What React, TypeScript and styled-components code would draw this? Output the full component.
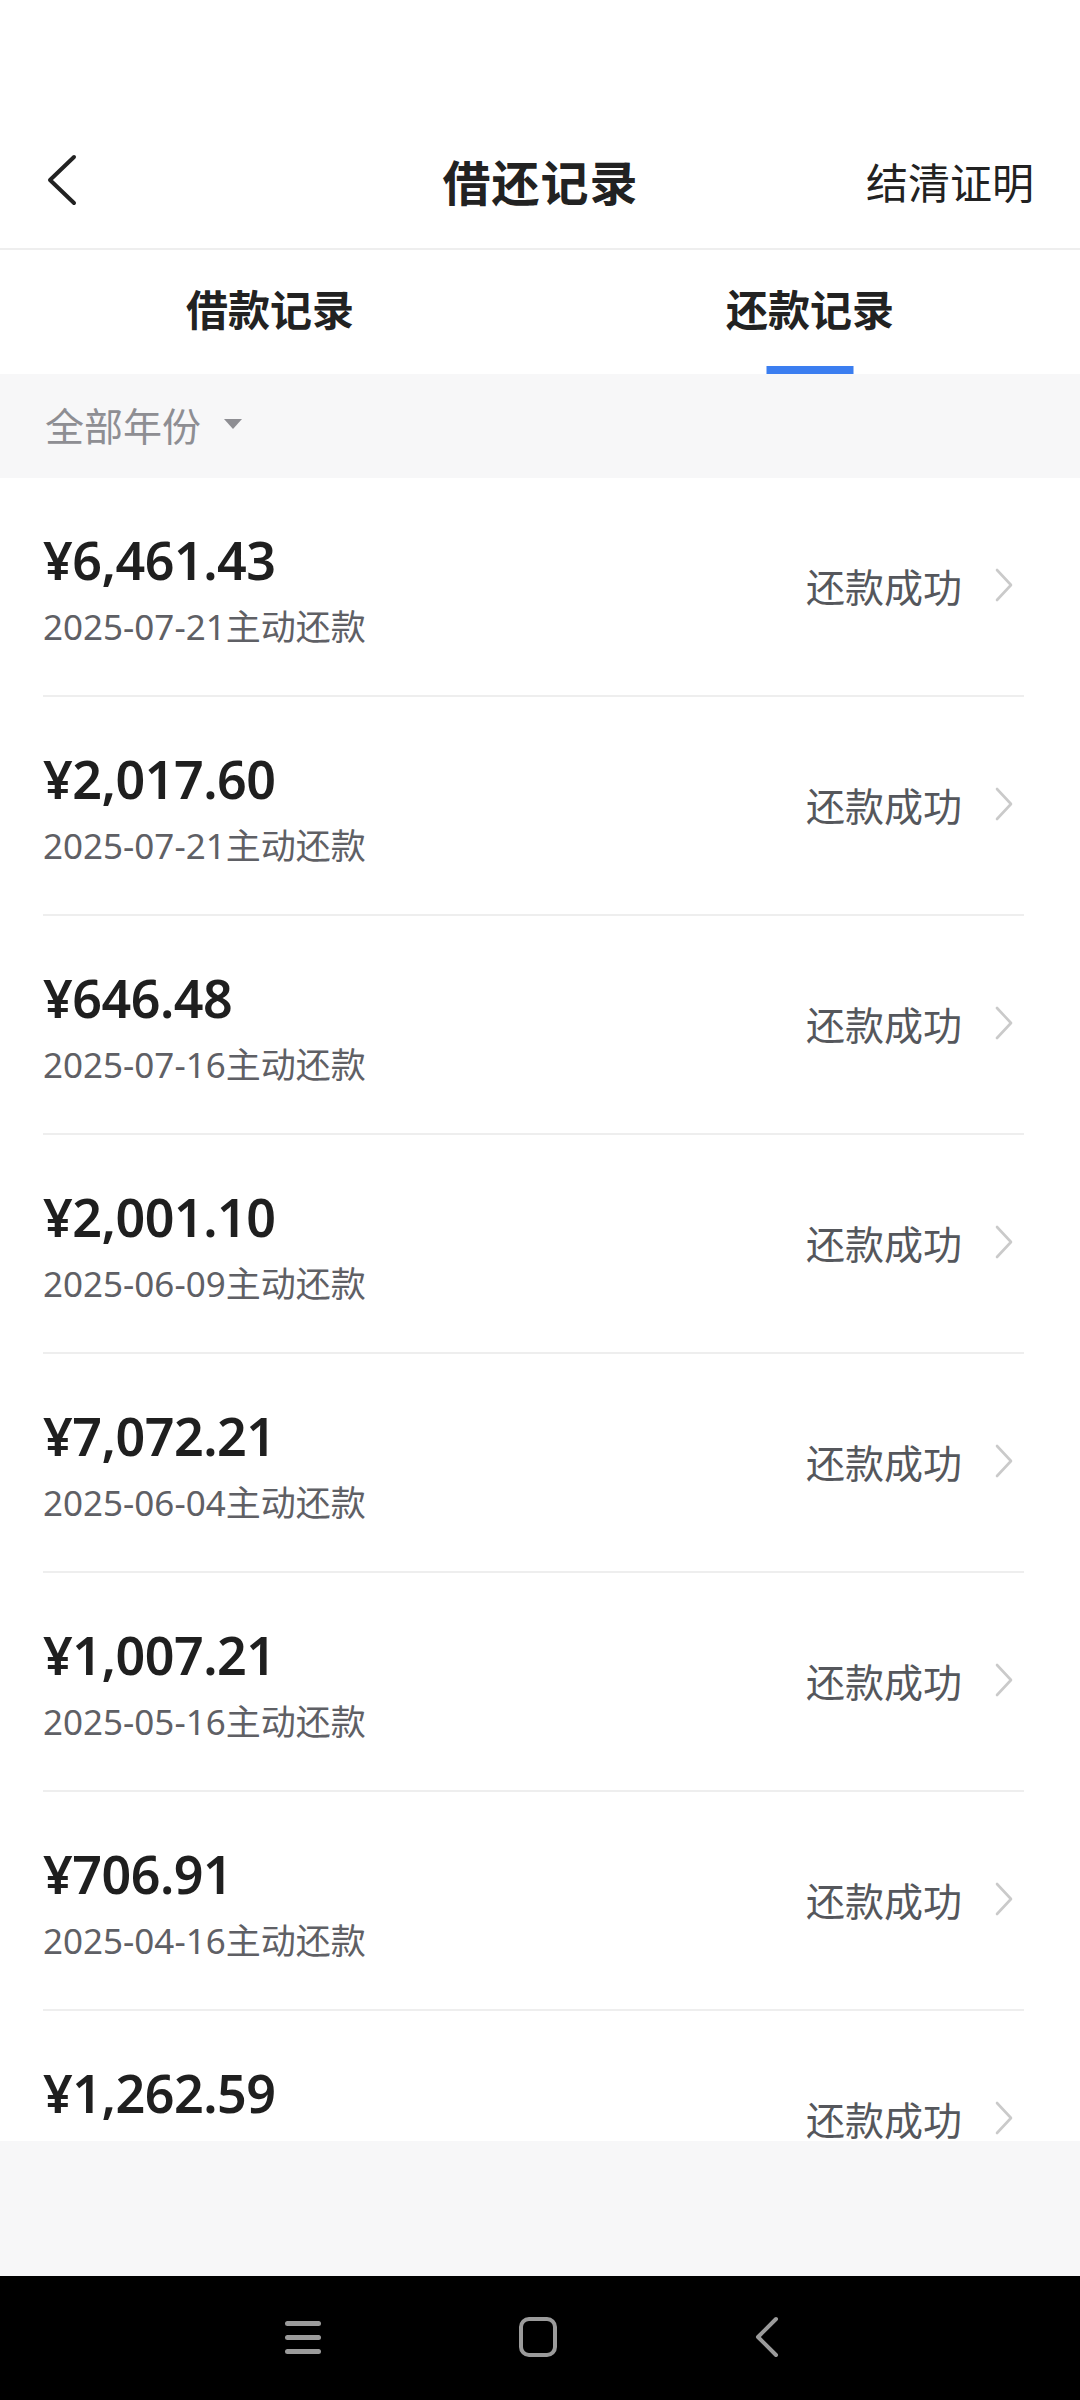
import React from "react";
import styled, { createGlobalStyle } from "styled-components";

const GlobalStyle = createGlobalStyle`
  body {
    margin: 0;
    background: #ffffff;
    font-family: "Noto Sans", "Noto Sans CJK SC", sans-serif;
  }
`;

const Page = styled.div`
  width: 1080px;
  height: 2400px;
  display: flex;
  flex-direction: column;
  background: #ffffff;
  overflow: hidden;
`;

const StatusSpace = styled.div`
  height: 118px;
  flex-shrink: 0;
`;

const Header = styled.div`
  height: 132px;
  flex-shrink: 0;
  display: grid;
  grid-template-columns: 1fr auto 1fr;
  align-items: center;
  padding: 0 46px 6px 47px;
  box-sizing: border-box;
  border-bottom: 2px solid #eeeeee;
`;

const BackButton = styled.div`
  display: flex;
  align-items: center;
`;

const Title = styled.div`
  font-size: 48px;
  font-weight: 700;
  color: #222222;
  letter-spacing: 1px;
`;

const HeaderAction = styled.div`
  justify-self: end;
  font-size: 42px;
  color: #222222;
`;

const Tabs = styled.div`
  height: 124px;
  flex-shrink: 0;
  display: grid;
  grid-template-columns: 1fr 1fr;
`;

const Tab = styled.div<{ active?: boolean }>`
  position: relative;
  display: flex;
  align-items: center;
  justify-content: center;
  padding-bottom: 10px;
  font-size: 42px;
  font-weight: 700;
  color: #222222;

  &::after {
    content: "";
    display: ${(p) => (p.active ? "block" : "none")};
    position: absolute;
    bottom: 0;
    left: 50%;
    transform: translateX(-50%);
    width: 87px;
    height: 8px;
    background: #3b7ef0;
  }
`;

const FilterBar = styled.div`
  height: 104px;
  flex-shrink: 0;
  box-sizing: border-box;
  display: flex;
  align-items: center;
  gap: 22px;
  padding: 0 0 4px 45px;
  background: #f7f7f8;
  font-size: 39px;
  color: #8e8e93;
`;

const List = styled.div`
  height: 1663px;
  flex-shrink: 0;
  overflow: hidden;
`;

const Row = styled.div`
  height: 217px;
  margin: 0 56px 0 43px;
  display: flex;
  justify-content: space-between;
  align-items: center;
  border-bottom: 2px solid #eeeeee;
`;

const Info = styled.div`
  align-self: flex-start;
  padding-top: 52px;
  display: flex;
  flex-direction: column;
  gap: 17px;
`;

const Amount = styled.div`
  font-size: 52px;
  line-height: 60px;
  font-weight: 600;
  color: #1f1f1f;
  letter-spacing: -0.5px;
`;

const DateLine = styled.div`
  font-size: 35px;
  line-height: 40px;
  color: #5f6065;
`;

const Status = styled.div`
  display: flex;
  align-items: center;
  gap: 32px;
  padding: 0 10px 3px 0;
  font-size: 39px;
  color: #55575c;
`;

const GrayFill = styled.div`
  height: 135px;
  flex-shrink: 0;
  background: #f7f7f8;
`;

const NavBar = styled.div`
  flex: 1;
  background: #000000;
  display: flex;
  align-items: center;
  justify-content: center;
  gap: 196px;
  padding: 0 16px 2px 0;
`;

const records = [
  { amount: "¥6,461.43", date: "2025-07-21主动还款" },
  { amount: "¥2,017.60", date: "2025-07-21主动还款" },
  { amount: "¥646.48", date: "2025-07-16主动还款" },
  { amount: "¥2,001.10", date: "2025-06-09主动还款" },
  { amount: "¥7,072.21", date: "2025-06-04主动还款" },
  { amount: "¥1,007.21", date: "2025-05-16主动还款" },
  { amount: "¥706.91", date: "2025-04-16主动还款" },
  { amount: "¥1,262.59", date: "2025-04-09主动还款" },
];

const Chevron = () => (
  <svg width="20" height="34" viewBox="0 0 20 34">
    <polyline points="3,2 17,17 3,32" fill="none" stroke="#cacaca" strokeWidth="2.6" strokeLinecap="round" strokeLinejoin="round" />
  </svg>
);

export default function App() {
  return (
    <Page>
      <GlobalStyle />
      <StatusSpace />
      <Header>
        <BackButton>
          <svg width="30" height="52" viewBox="0 0 30 52">
            <polyline points="27,3 3,26 27,49" fill="none" stroke="#222" strokeWidth="4" strokeLinecap="round" strokeLinejoin="round" />
          </svg>
        </BackButton>
        <Title>借还记录</Title>
        <HeaderAction>结清证明</HeaderAction>
      </Header>
      <Tabs>
        <Tab>借款记录</Tab>
        <Tab active>还款记录</Tab>
      </Tabs>
      <FilterBar>
        <span>全部年份</span>
        <svg width="20" height="12" viewBox="0 0 20 12">
          <polygon points="1,1 19,1 10,11" fill="#8e8e93" />
        </svg>
      </FilterBar>
      <List>
        {records.map((r, i) => (
          <Row key={i}>
            <Info>
              <Amount>{r.amount}</Amount>
              <DateLine>{r.date}</DateLine>
            </Info>
            <Status>
              <span>还款成功</span>
              <Chevron />
            </Status>
          </Row>
        ))}
      </List>
      <GrayFill />
      <NavBar>
        <svg width="38" height="38" viewBox="0 0 38 38">
          <rect x="1" y="3" width="36" height="5" rx="2.5" fill="#9b9b9b" />
          <rect x="1" y="17" width="36" height="5" rx="2.5" fill="#9b9b9b" />
          <rect x="1" y="31" width="36" height="5" rx="2.5" fill="#9b9b9b" />
        </svg>
        <svg width="40" height="42" viewBox="0 0 40 42">
          <rect x="3" y="3" width="34" height="36" rx="8" fill="none" stroke="#9b9b9b" strokeWidth="4" />
        </svg>
        <svg width="26" height="42" viewBox="0 0 26 42">
          <polyline points="22,3 4,21 22,39" fill="none" stroke="#9b9b9b" strokeWidth="4" strokeLinecap="round" strokeLinejoin="round" />
        </svg>
      </NavBar>
    </Page>
  );
}
